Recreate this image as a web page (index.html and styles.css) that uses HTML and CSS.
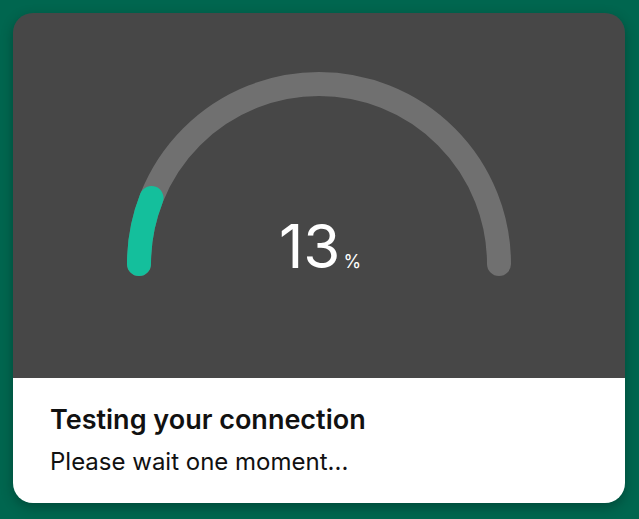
FILE: index.html
```html
<!DOCTYPE html>
<html>
<head>
<meta charset="utf-8">
<link rel="stylesheet" href="styles.css">
</head>
<body>
<div class="card">
  <div class="gauge-area">
    <div class="gauge">
      <svg class="arc" width="612" height="365" viewBox="0 0 612 365">
        <path d="M 126 251 A 180 180 0 0 1 486 251" fill="none" stroke="#707070" stroke-width="24" stroke-linecap="round"/>
        <path d="M 126 251 A 180 180 0 0 1 138.5 185" fill="none" stroke="#14bf9c" stroke-width="24" stroke-linecap="round"/>
      </svg>
      <div class="value"><span class="num">13</span><span class="pct">%</span></div>
    </div>
  </div>
  <div class="info">
    <div class="title">Testing your connection</div>
    <div class="sub">Please wait one moment...</div>
  </div>
</div>
</body>
</html>
```
FILE: styles.css
```css
html, body {
  margin: 0;
  padding: 0;
}
body {
  width: 639px;
  height: 519px;
  background: #00664f;
  font-family: Inter, "Noto Sans", sans-serif;
  padding: 13px 14px 16px 13px;
  box-sizing: border-box;
}
.card {
  width: 612px;
  height: 490px;
  border-radius: 20px;
  overflow: hidden;
  display: flex;
  flex-direction: column;
  box-shadow: 0 4px 12px rgba(0, 40, 30, 0.45);
}
.gauge-area {
  height: 365px;
  background: #474747;
}
.gauge {
  position: relative;
  width: 612px;
  height: 365px;
}
.arc {
  display: block;
}
.value {
  position: absolute;
  left: 0;
  right: 0;
  top: 197px;
  display: flex;
  justify-content: center;
  align-items: baseline;
  color: #ffffff;
  padding-left: 2px;
}
.num {
  font-size: 60px;
  font-weight: 400;
}
.pct {
  font-size: 18px;
  margin-left: 3px;
}
.info {
  flex: 1;
  background: #ffffff;
  padding: 26px 37px;
}
.title {
  font-size: 27px;
  font-weight: 600;
  color: #111111;
  line-height: 32px;
}
.sub {
  margin-top: 12px;
  font-size: 24px;
  color: #111111;
  line-height: 28px;
}
```
